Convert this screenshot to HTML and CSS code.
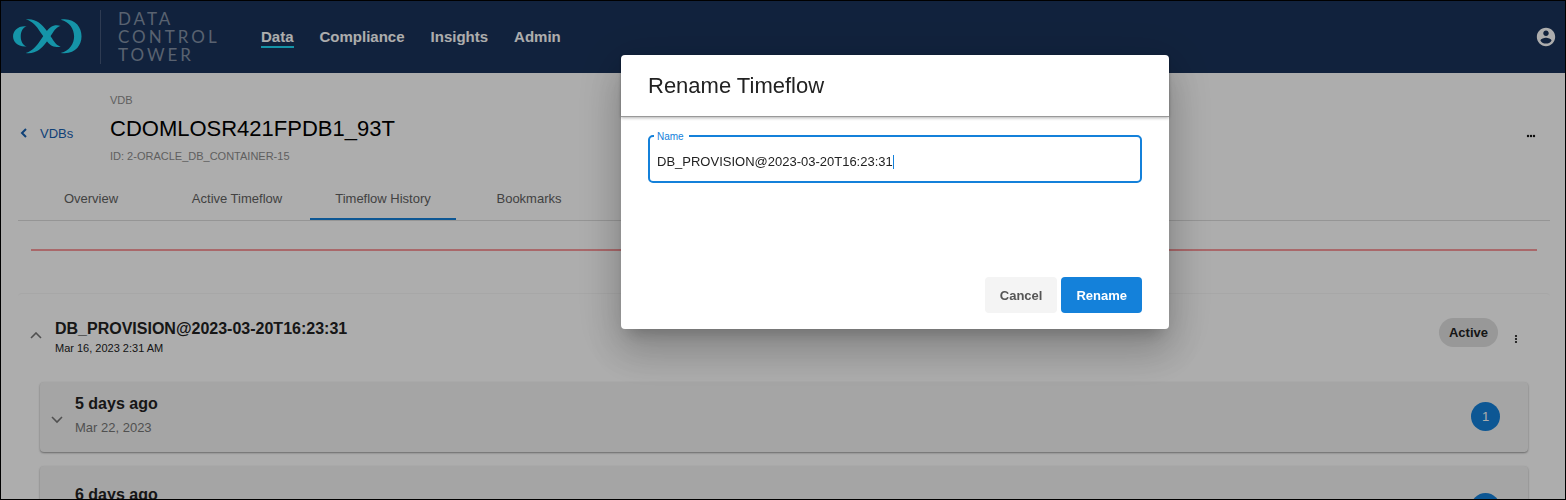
FILE: index.html
```html
<!DOCTYPE html>
<html lang="en">
<head>
  <meta charset="UTF-8">
  <title>Data Control Tower</title>
  <link rel="stylesheet" href="styles.css">
</head>
<body>
  <header class="topbar">
    <a class="brand" href="#">
      <svg class="brand-mark" viewBox="36 54 212 112" aria-hidden="true">
        <path d="M79 79 C24 74 24 145 79 140 C55 134 55 86 79 79Z"/>
        <path d="M76 58 C106 54 124 72 138 90 L156 116 C163 128 171 138 182 140 C162 146 149 137 139 123 L120 96 C108 78 96 64 76 58Z"/>
        <path d="M76 160 C106 164 124 146 138 128 L156 102 C163 90 171 80 182 78 C162 72 149 81 139 95 L120 122 C108 140 96 154 76 160Z"/>
        <path d="M182 59 C266 46 266 173 182 160 C236 148 236 71 182 59Z"/>
      </svg>
      <span class="brand-name">DATA<br>CONTROL<br>TOWER</span>
    </a>
    <nav class="main-nav">
      <a class="active" href="#">Data</a>
      <a href="#">Compliance</a>
      <a href="#">Insights</a>
      <a href="#">Admin</a>
    </nav>
    <button class="icon-btn account" aria-label="Account">
      <svg width="22" height="22" viewBox="0 0 24 24" fill="currentColor"><path d="M12 2C6.48 2 2 6.48 2 12s4.48 10 10 10 10-4.48 10-10S17.52 2 12 2zm0 3c1.66 0 3 1.34 3 3s-1.34 3-3 3-3-1.34-3-3 1.34-3 3-3zm0 14.2c-2.5 0-4.71-1.28-6-3.22.03-1.99 4-3.08 6-3.08 1.99 0 5.97 1.09 6 3.08-1.29 1.94-3.5 3.22-6 3.22z"/></svg>
    </button>
  </header>

  <main class="page">
    <div class="page-head">
      <a class="back" href="#">
        <svg width="8" height="10" viewBox="0 0 8 10"><path d="M6 1 L2 5 L6 9"/></svg>
        VDBs
      </a>
      <div class="page-title">
        <span class="caption">VDB</span>
        <h1>CDOMLOSR421FPDB1_93T</h1>
        <span class="caption">ID: 2-ORACLE_DB_CONTAINER-15</span>
      </div>
      <button class="icon-btn" aria-label="More actions">
        <svg width="10" height="4" viewBox="0 0 10 4" fill="currentColor"><circle cx="2" cy="2" r="1.2"/><circle cx="5" cy="2" r="1.2"/><circle cx="8" cy="2" r="1.2"/></svg>
      </button>
    </div>

    <nav class="tabs">
      <a href="#">Overview</a>
      <a href="#">Active Timeflow</a>
      <a class="active" href="#">Timeflow History</a>
      <a href="#">Bookmarks</a>
    </nav>

    <hr class="alert-line">

    <section class="timeflow">
      <div class="timeflow-head">
        <button class="icon-btn toggle" aria-label="Collapse">
          <svg width="12" height="8" viewBox="0 0 12 8"><path d="M1 6 L6 1 L11 6"/></svg>
        </button>
        <div class="timeflow-name">
          <h2>DB_PROVISION@2023-03-20T16:23:31</h2>
          <span>Mar 16, 2023 2:31 AM</span>
        </div>
        <span class="pill">Active</span>
        <button class="icon-btn kebab" aria-label="Timeflow actions">
          <svg width="4" height="10" viewBox="0 0 4 10" fill="currentColor"><circle cx="2" cy="2" r="1.1"/><circle cx="2" cy="5" r="1.1"/><circle cx="2" cy="8" r="1.1"/></svg>
        </button>
      </div>

      <div class="day">
        <button class="icon-btn toggle" aria-label="Expand">
          <svg width="12" height="8" viewBox="0 0 12 8"><path d="M1 1 L6 6 L11 1"/></svg>
        </button>
        <div class="day-name">
          <h3>5 days ago</h3>
          <span>Mar 22, 2023</span>
        </div>
        <span class="count">1</span>
      </div>

      <div class="day day-tall">
        <div class="day-name">
          <h3>6 days ago</h3>
        </div>
        <span class="count"></span>
      </div>
    </section>
  </main>

  <div class="backdrop">
    <form class="dialog" role="dialog" aria-labelledby="dialogTitle">
      <h2 class="dialog-title" id="dialogTitle">Rename Timeflow</h2>
      <div class="dialog-body">
        <div class="field">
          <label for="name">Name</label>
          <input type="text" id="name" value="DB_PROVISION@2023-03-20T16:23:31" spellcheck="false">
          <span class="caret"></span>
        </div>
      </div>
      <div class="dialog-actions">
        <button type="button" class="btn">Cancel</button>
        <button type="submit" class="btn btn-primary">Rename</button>
      </div>
    </form>
  </div>
</body>
</html>
```
FILE: styles.css
```css
* {
  box-sizing: border-box;
}

body {
  margin: 0;
  height: 100vh;
  overflow: hidden;
  background: #fff;
  color: #222;
  font-family: "Liberation Sans", Arial, sans-serif;
  font-size: 13px;
}

/* thin frame around the window */
body::after {
  content: "";
  position: fixed;
  inset: 0;
  border: 1px solid #000;
  pointer-events: none;
  z-index: 20;
}

h1, h2, h3 {
  margin: 0;
}

a {
  text-decoration: none;
}

.icon-btn {
  display: flex;
  padding: 0;
  border: none;
  background: none;
  color: #111;
  cursor: pointer;
}

/* top bar */
.topbar {
  display: flex;
  align-items: center;
  height: 73px;
  padding: 0 9px 0 12px;
  background: #1a335a;
}

.brand {
  display: flex;
  align-items: center;
  width: 249px;
}

.brand-mark {
  width: 71px;
  height: 37px;
  fill: #1fdbf8;
}

.brand-name {
  margin-left: 17px;
  padding-left: 17px;
  border-left: 1px solid #45587a;
  color: #8391a6;
  font-family: Lato, sans-serif;
  font-size: 17px;
  line-height: 18px;
  letter-spacing: 3px;
}

.main-nav {
  display: flex;
  gap: 26px;
  flex: 1;
}

.main-nav a {
  padding: 2px 0 1px;
  border-bottom: 2px solid transparent;
  color: #fff;
  font-size: 15px;
  font-weight: bold;
}

.main-nav a.active {
  border-color: #1fdbf8;
}

.account {
  color: #fff;
}

/* page header */
.page {
  padding: 20px 16px 0 18px;
}

.page-head {
  display: flex;
  align-items: center;
  padding-right: 14px;
}

.back {
  display: flex;
  align-items: center;
  gap: 12px;
  width: 92px;
  padding: 10px 0 0 2px;
  color: #1760b0;
}

.back svg {
  fill: none;
  stroke: currentColor;
  stroke-width: 2;
}

.page-title {
  flex: 1;
}

.page-head .icon-btn {
  padding-top: 16px;
}

.page-title h1 {
  margin: 9px 0 7px;
  color: #000;
  font-size: 22px;
  font-weight: normal;
  line-height: 26px;
}

.caption {
  display: block;
  color: #8d8d8d;
  font-size: 11px;
  line-height: 14px;
}

.tabs {
  display: flex;
  margin-top: 14px;
  border-bottom: 1px solid #dcdcdc;
}

.tabs a {
  width: 146px;
  height: 43px;
  border-bottom: 2px solid transparent;
  color: #626262;
  line-height: 43px;
  text-align: center;
}

.tabs a.active {
  border-color: #1481da;
}

.alert-line {
  height: 2px;
  margin: 28px 13px 42px;
  border: none;
  background: #fa9a9d;
}

/* timeflow list */
.timeflow {
  padding: 24px 22px 0;
  border-top: 1px solid #f6f6f6;
  border-radius: 4px;
}

.timeflow-head {
  display: flex;
  align-items: flex-start;
  height: 64px;
  margin: 0 4px 0 -10px;
}

.timeflow-head .toggle {
  margin: 14px 13px 0 0;
}

.toggle svg {
  fill: none;
  stroke: #777;
  stroke-width: 1.6;
}

.timeflow-name {
  flex: 1;
}

.timeflow-name h2 {
  font-size: 16px;
  line-height: 22px;
}

.timeflow-name span {
  display: block;
  font-size: 11px;
  line-height: 16px;
}

.pill {
  padding: 0 10px;
  border-radius: 15px;
  background: #e0e0e0;
  font-weight: bold;
  line-height: 29px;
}

.kebab {
  margin: 16px 6px 0 16px;
}

.day {
  display: flex;
  align-items: flex-start;
  height: 70px;
  margin-bottom: 14px;
  padding: 10px 28px 0 11px;
  border-radius: 4px;
  background: #f3f3f3;
  box-shadow: 0 1px 2px rgba(0, 0, 0, 0.4);
}

.day-tall {
  padding: 17px 28px 0 35px;
}

.day .toggle {
  margin: 24px 12px 0 0;
}

.day-name {
  flex: 1;
}

.day-name h3 {
  font-size: 16px;
  line-height: 24px;
}

.day-name span {
  display: block;
  color: #777;
  line-height: 24px;
}

.count {
  width: 29px;
  height: 29px;
  margin-top: 10px;
  border-radius: 50%;
  background: #1481da;
  color: #fff;
  line-height: 29px;
  text-align: center;
}

/* rename dialog */
.backdrop {
  position: fixed;
  inset: 0;
  display: flex;
  align-items: flex-start;
  justify-content: center;
  padding: 55px 0 0 224px;
  background: rgba(0, 0, 0, 0.32);
  z-index: 10;
}

.dialog {
  width: 548px;
  border-radius: 4px;
  background: #fff;
  box-shadow: 0 11px 15px -7px rgba(0, 0, 0, 0.2),
    0 24px 38px 3px rgba(0, 0, 0, 0.14),
    0 9px 46px 8px rgba(0, 0, 0, 0.12);
}

.dialog-title {
  padding: 0 27px;
  border-bottom: 1px solid #999;
  box-shadow: 0 1px 3px rgba(0, 0, 0, 0.3);
  font-size: 22px;
  font-weight: normal;
  line-height: 61px;
}

.dialog-body {
  min-height: 160px;
  padding: 18px 27px;
}

.field {
  position: relative;
}

.field label {
  position: absolute;
  top: -4px;
  left: 6px;
  padding: 0 5px 0 3px;
  background: #fff;
  color: #1481da;
  font-size: 10px;
  line-height: 12px;
}

.field input {
  display: block;
  width: 100%;
  height: 48px;
  padding: 4px 7px 0;
  border: 2px solid #1481da;
  border-radius: 5px;
  outline: none;
  color: #222;
  font: inherit;
  caret-color: transparent;
}

.caret {
  position: absolute;
  top: 20px;
  left: 245px;
  width: 1px;
  height: 14px;
  background: #1481da;
}

.dialog-actions {
  display: flex;
  justify-content: flex-end;
  gap: 4px;
  padding: 0 27px 16px;
}

.btn {
  height: 36px;
  padding: 0 15px;
  border: none;
  border-radius: 4px;
  background: #f4f4f4;
  color: #555;
  font: bold 13px "Liberation Sans", Arial, sans-serif;
  cursor: pointer;
}

.btn-primary {
  background: #1481da;
  color: #fff;
}
```
